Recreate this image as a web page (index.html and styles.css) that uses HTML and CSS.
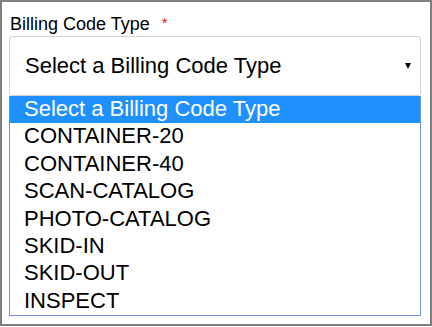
FILE: index.html
```
<!doctype html>
<html lang=en>
<head>
	<meta charset=utf-8>
	<title>Billing Code Type</title>
	<link rel="stylesheet" href="styles.css">
</head>
<body>
	<div class="field">
		<label class="field-label">Billing Code Type <span class="req">*</span></label>
		<div class="picker">
			<div class="picker-value">
				<span>Select a Billing Code Type</span>
				<svg class="picker-arrow" width="6" height="6" viewBox="0 0 6 6"><polygon points="0,0 6,0 3,6" fill="#000"/></svg>
			</div>
			<ul class="picker-list">
				<li class="selected">Select a Billing Code Type</li>
				<li>CONTAINER-20</li>
				<li>CONTAINER-40</li>
				<li>SCAN-CATALOG</li>
				<li>PHOTO-CATALOG</li>
				<li>SKID-IN</li>
				<li>SKID-OUT</li>
				<li>INSPECT</li>
			</ul>
		</div>
	</div>
</body>
</html>
```
FILE: styles.css
```
body	{ margin:0; font-family:"Liberation Sans", Arial, sans-serif; color:#000; background:#fff; }
.field	{ width:432px; height:326px; box-sizing:border-box;
		  border:2px solid #808080; padding:12px 9px 0 7px; }
.field-label { display:block; font-size:18px; line-height:20px; padding-left:1px; }
.req	{ color:#e8101a; font-size:15px; margin-left:7px; line-height:0; vertical-align:2px; }
.picker	{ width:412px; margin-top:2px; }
.picker-value { height:60px; box-sizing:border-box;
		  display:flex; align-items:center; justify-content:space-between;
		  border:1px solid #d0d0d0; border-radius:3px;
		  padding:0 9px 1px 15px;
		  font-size:22px; line-height:25px; }
.picker-arrow { display:block; margin-top:1px; }
.picker-list { list-style:none; margin:0; padding:0;
		  border:1px solid #7397d6; border-top:0; }
.picker-list li { height:27.375px; line-height:25px; font-size:22px; padding-left:14px; }
.picker-list li.selected { background:#1e90ff; color:#fff; }
```
